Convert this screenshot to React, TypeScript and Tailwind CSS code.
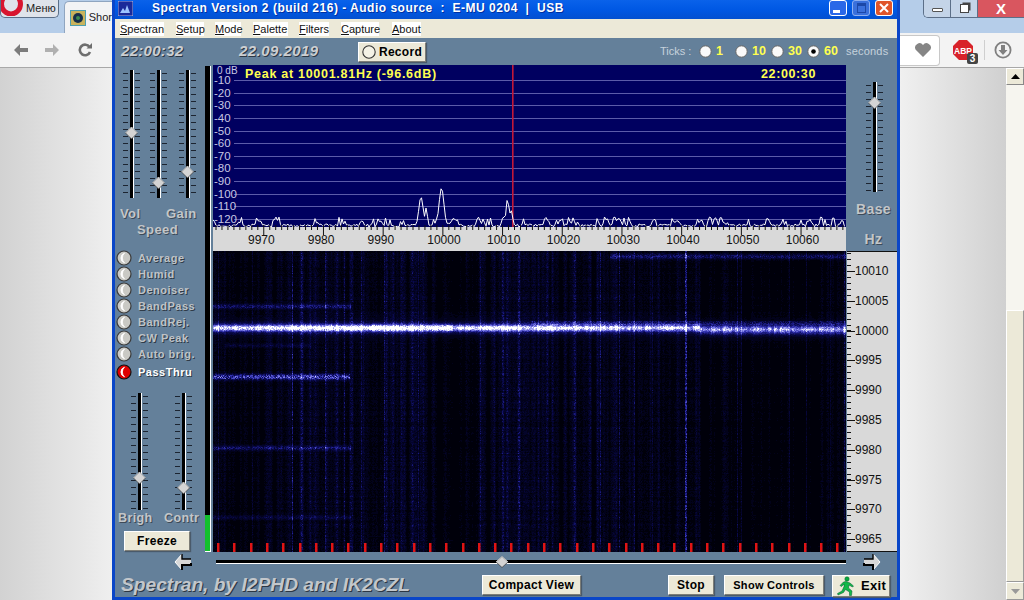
import React, { useMemo } from "react";

function rng(seed: number) {
  let a = seed;
  return () => {
    a |= 0;
    a = (a + 0x6d2b79f5) | 0;
    let t = Math.imul(a ^ (a >>> 15), 1 | a);
    t = (t + Math.imul(t ^ (t >>> 7), 61 | t)) ^ t;
    return ((t ^ (t >>> 14)) >>> 0) / 4294967296;
  };
}

const stops: [number, number[]][] = [
  [0, [0, 0, 10]],
  [0.25, [8, 8, 70]],
  [0.5, [40, 40, 165]],
  [0.75, [130, 130, 235]],
  [1, [255, 255, 255]],
];
function colour(t: number) {
  for (let i = 1; i < stops.length; i++) {
    if (t <= stops[i][0]) {
      const [a, ca] = stops[i - 1];
      const [b, cb] = stops[i];
      const k = (t - a) / (b - a);
      const c = ca.map((v, j) => Math.round(v + (cb[j] - v) * k));
      return `rgb(${c[0]},${c[1]},${c[2]})`;
    }
  }
  return "#fff";
}

const W = 633;
const H = 301;
const LEVELS = 16;

function useWaterfall() {
  return useMemo(() => {
    const r = rng(42);
    const raw = new Float32Array(W);
    for (let x = 0; x < W; x++) {
      const ax = x + 213;
      let region = 1.1;
      if (ax < 300) region = 0.75;
      else if (ax < 620) region = 1.15;
      else if (ax < 700) region = 0.85;
      else region = 0.4;
      if (ax > 426 && ax < 480) region *= 0.55;
      const v = r();
      raw[x] = region * (0.03 + 0.17 * v * v + (v > 0.88 ? 0.1 : 0));
    }
    const col = new Float32Array(W);
    for (let x = 0; x < W; x++) {
      col[x] = 0.25 * (raw[x - 1] ?? raw[x]) + 0.5 * raw[x] + 0.25 * (raw[x + 1] ?? raw[x]);
    }
    const lines: [number, number][] = [
      [218, 0.2], [252, 0.16], [292, 0.34], [325, 0.3], [344, 0.26], [361, 0.26], [384, 0.28], [418, 0.24],
      [480, 0.26], [546, 0.2], [600, 0.28], [619, 0.26], [634, 0.24], [652, 0.2], [685, 0.4], [686, 0.4],
      [737, 0.2], [741, 0.18], [789, 0.16], [806, 0.16], [830, 0.14], [844, 0.26],
    ];
    lines.forEach(([x, s]) => (col[x - 213] = s));

    const amp = new Float32Array(W);
    let cur = 0.8;
    for (let x = 0; x < W; x++) {
      const ax = x + 213;
      if (x % 3 === 0) cur = 0.62 + r() * 0.38;
      let m = 0.82;
      if (ax > 290 && ax < 450) m = 1.02;
      else if (ax > 450 && ax < 600) m = 0.86;
      else if (ax >= 600 && ax < 700) m = 0.76;
      else if (ax >= 700) m = 0.6;
      amp[x] = cur * m;
    }

    const streaks: [number, number, number, number, number][] = [
      [376.5, 213, 349, 0.56, 2.0],
      [306, 213, 350, 0.3, 1.8],
      [447.5, 213, 350, 0.3, 1.8],
      [345, 225, 310, 0.16, 1.2],
      [517, 213, 350, 0.16, 1.6],
      [256, 610, 846, 0.3, 1.8],
    ];

    const paths: string[] = Array.from({ length: LEVELS }, () => "");
    for (let y = 0; y < H; y++) {
      const ay = y + 251;
      const rowMul = 0.75 + 0.5 * r();
      let runL = -1;
      let runS = 0;
      for (let x = 0; x <= W; x++) {
        let lvl = 0;
        if (x < W) {
          const ax = x + 213;
          let i = col[x] * rowMul * (0.5 + r() * 0.9);
          const cy = ax < 700 ? 327.5 : 329;
          const sg = ax < 700 ? 2.6 : 3.3;
          const dy = ay - cy;
          i += amp[x] * (0.7 + r() * 0.5) * Math.exp(-(dy * dy) / (2 * sg * sg));
          i += 0.3 * Math.exp(-Math.abs(dy) / 5);
          if (ax > 530 && ay > 320 && ay < 325) i += 0.22 * r();
          for (const [sy, x0, x1, a, s] of streaks) {
            if (ax >= x0 && ax <= x1) {
              const d = ay - sy;
              if (Math.abs(d) < 6) i += a * (0.4 + r() * 0.9) * Math.exp(-(d * d) / (2 * s * s));
            }
          }
          lvl = Math.min(LEVELS - 1, Math.floor(i * LEVELS));
        }
        if (lvl !== runS) {
          if (runS > 0) paths[runS] += `M${runL} ${y}h${x - runL}v1h${-(x - runL)}z`;
          runL = x;
          runS = lvl;
        }
      }
    }
    return paths;
  }, []);
}

function useTrace() {
  return useMemo(() => {
    const r = rng(7);
    const base = 162;
    const peaks: [number, number, number][] = [
      [421 - 213, 30, 2.2],
      [426 - 213, 19, 1.4],
      [441.5 - 213, 39, 2.4],
      [507.5 - 213, 28, 1.5],
      [511 - 213, 17, 1.6],
    ];
    const pts: string[] = [];
    let burst = 0;
    for (let x = 0; x < W; x += 1.5) {
      if (r() < 0.12) burst = 2 + Math.floor(r() * 5);
      let h = r() * 3;
      if (burst > 0) {
        h = 1 + r() * 9;
        burst--;
      }
      for (const [px, a, s] of peaks) {
        const d = x - px;
        h = Math.max(h, a * Math.exp(-(d * d) / (2 * s * s)));
      }
      pts.push(`${x},${(base - h).toFixed(1)}`);
    }
    return pts.join(" ");
  }, []);
}

function Slider({ h, thumb }: { h: number; thumb: number }) {
  const ticks: number[] = [];
  for (let y = 3; y < h; y += 7) ticks.push(y);
  return (
    <svg width="24" height={h} className="block shrink-0">
      {ticks.map((y) => (
        <g key={y} fill="#1c2430">
          <rect x="4" y={y} width="5" height="1" />
          <rect x="16" y={y} width="5" height="1" />
        </g>
      ))}
      <rect x="11" y="0" width="3" height={h} fill="#000" />
      <rect x="14" y="0" width="1" height={h} fill="#fff" />
      <polygon
        points={`12.5,${thumb - 6} 18.5,${thumb} 12.5,${thumb + 6} 6.5,${thumb}`}
        fill="#d4d4d4"
        stroke="#333"
        strokeWidth="0.7"
      />
      <polyline points={`6.5,${thumb} 12.5,${thumb - 6} 18.5,${thumb}`} fill="none" stroke="#fff" strokeWidth="0.7" />
    </svg>
  );
}

function Led({ on }: { on?: boolean }) {
  return (
    <svg width="16" height="16" className="block shrink-0">
      <circle cx="8" cy="8" r="7" fill={on ? "#e00000" : "#c9c9c4"} stroke={on ? "#111" : "#3a3a3a"} strokeWidth="1.2" />
      <path d="M8.5 3.2 A5 5 0 0 0 8.5 12.8 A6.5 6.5 0 0 1 8.5 3.2z" fill="#fff" stroke="#fff" strokeWidth="0.8" />
    </svg>
  );
}

function TickRadio({ on }: { on?: boolean }) {
  return (
    <svg width="13" height="13" className="block shrink-0">
      <circle cx="6.5" cy="6.5" r="5.7" fill="#fafafa" stroke="#666" strokeWidth="1" />
      {on && <circle cx="6.5" cy="6.5" r="2.3" fill="#000" />}
    </svg>
  );
}

const btn =
  "flex items-center justify-center shrink-0 bg-[#ece9d8] border border-t-white border-l-white border-r-[#7d7d76] border-b-[#7d7d76] shadow-[1px_1px_1px_#4a5a6a] text-black font-bold text-[12px] tracking-[0.3px]";

const LABEL = "font-bold text-[#c3c6c9] [text-shadow:1px_1px_0_#3d4a58] leading-[16px] tracking-[0.4px]";

function Arrow({ dir }: { dir: "l" | "r" }) {
  return (
    <svg width="18" height="20" className={dir === "r" ? "block -scale-x-100" : "block"}>
      <path d="M8 2 L1 10 L8 18 V13 H17 V7 H8z" fill="#d8d8d8" />
      <path d="M8 2 L1 10 L8 18" fill="none" stroke="#fff" strokeWidth="1" />
      <path d="M8 18 V13 H17 V11" fill="none" stroke="#000" strokeWidth="2" />
      <path d="M8 2 V7 H17" fill="none" stroke="#000" strokeWidth="1.4" />
    </svg>
  );
}

function Runner() {
  return (
    <svg width="20" height="20" viewBox="0 0 20 20" className="block shrink-0">
      <circle cx="11" cy="3" r="2.2" fill="#0aa83c" stroke="#063" strokeWidth="0.5" />
      <path
        d="M10 5.5 L14 7 L17.5 10 L16.5 11 L13 9 L12.5 12 L16 15 L15.5 19.5 L13.5 19.5 L13.5 16 L9.5 13.5 L7.5 16.5 L2 19 L1.5 17.5 L6 15 L8 10.5 L8 8 L5.5 10.5 L4 9.5 L7.5 6z"
        fill="#12b848"
        stroke="#053"
        strokeWidth="0.5"
      />
    </svg>
  );
}

function Chart() {
  const trace = useTrace();
  const labels = ["0 dB", "-10", "-20", "-30", "-40", "-50", "-60", "-70", "-80", "-90", "-100", "-110", "-120"];
  const freq = ["9970", "9980", "9990", "10000", "10010", "10020", "10030", "10040", "10050", "10060"];
  const minors: number[] = [];
  for (let x = 3; x < W; x += 5.97) minors.push(x);
  return (
    <svg width={W} height="186" className="block shrink-0" fontFamily="'Liberation Sans', sans-serif">
      <rect width={W} height="162" fill="#000060" />
      <rect y="162" width={W} height="24" fill="#d9d9d9" />
      {labels.map((l, i) => {
        const y = 2.5 + i * 12.62;
        return i > 0 ? (
          <line key={l} x1="21" x2={W} y1={Math.round(y) + 0.5} y2={Math.round(y) + 0.5} stroke="#5c5caa" />
        ) : null;
      })}
      <rect x="299" y="0" width="1.6" height="162" fill="#c01838" />
      <polyline points={trace} fill="none" stroke="#fff" strokeWidth="1" />
      {labels.map((l, i) => {
        const y = 2.5 + i * 12.62;
        return (
          <text key={l} x={i === 0 ? 4 : 1} y={i === 0 ? 9 : y + 4} fontSize={i === 0 ? 10 : 11.5} fill="#c8c8e4">
            {l}
          </text>
        );
      })}
      {minors.map((x, i) => (
        <line key={x} x1={x} x2={x} y1="160" y2={(i + 2) % 10 === 0 ? 170 : 165} stroke="#111" />
      ))}
      {freq.map((f, i) => (
        <text key={f} x={35 + i * 59.75} y="179" fontSize="12" fill="#111">
          {f}
        </text>
      ))}
      <text x="32" y="12.5" fontSize="12.5" fontWeight="700" fill="#ffff50" letterSpacing="0.72">
        Peak at 10001.81Hz (-96.6dB)
      </text>
      <text x="548" y="12.5" fontSize="12.5" fontWeight="700" fill="#ffff50" letterSpacing="0.62">
        22:00:30
      </text>
    </svg>
  );
}

function Waterfall() {
  const paths = useWaterfall();
  const ticks: number[] = [];
  for (let i = 0; i < 39; i++) ticks.push(4 + i * 16.3);
  return (
    <svg width={W} height={H} className="block shrink-0 overflow-hidden">
      <rect width={W} height={H} fill="#00000a" />
      <g className="blur-[0.6px]" shapeRendering="crispEdges">
        {paths.map((d, i) => (i > 0 ? <path key={i} d={d} fill={colour(i / (LEVELS - 1))} /> : null))}
      </g>
      {ticks.map((x) => (
        <rect key={x} x={Math.round(x)} y="292" width="2.5" height="9" fill="#e01414" />
      ))}
    </svg>
  );
}

function FreqScale() {
  const labels = ["10010", "10005", "10000", "9995", "9990", "9985", "9980", "9975", "9970", "9965"];
  const minors: number[] = [];
  for (let y = 2; y < H; y += 5.96) minors.push(y);
  return (
    <svg width="50" height={H} className="block" fontFamily="'Liberation Sans', sans-serif">
      <rect width="50" height={H} fill="#d9d9d9" />
      <rect y="0" width="50" height="1" fill="#111" />
      <rect y={H - 1} width="50" height="1" fill="#111" />
      {minors.map((y) => (
        <line key={y} x1="0" x2="4" y1={Math.round(y) + 0.5} y2={Math.round(y) + 0.5} stroke="#111" />
      ))}
      {labels.map((l, i) => {
        const y = 20 + i * 29.8;
        return (
          <g key={l}>
            <line x1="0" x2="8" y1={Math.round(y) + 0.5} y2={Math.round(y) + 0.5} stroke="#111" />
            <text x="8" y={y + 4} fontSize="12" fill="#111">
              {l}
            </text>
          </g>
        );
      })}
    </svg>
  );
}

function LeftChrome() {
  return (
    <div className="w-[112px] h-full shrink-0 flex flex-col">
      <div className="h-[33px] bg-[#b5cde9] flex items-start relative overflow-hidden">
        <div className="w-[62px] h-[18px] rounded-b-[5px] bg-[#dfe3ea] border border-t-0 border-[#5c6f88] flex items-center overflow-hidden">
          <svg width="24" height="18" className="block shrink-0 -mt-[4px]">
            <ellipse cx="10" cy="6" rx="9.5" ry="10" fill="none" stroke="#d8152f" strokeWidth="5" />
          </svg>
          <span className="text-[11px] text-[#222] ml-[1px]">Меню</span>
        </div>
        <div className="ml-[5px] mt-[1px] flex-1 h-[32px] bg-[#f2f3f5] rounded-tl-[5px] border-l border-t border-[#8fa5c0] flex items-center pl-[5px]">
          <svg width="16" height="16" className="block shrink-0">
            <rect width="16" height="16" fill="#4d9fb0" />
            <rect x="1" y="1" width="14" height="14" fill="#c9b35c" />
            <circle cx="8" cy="8" r="5" fill="#16304a" />
            <circle cx="8" cy="8" r="2" fill="#3a8a50" />
          </svg>
          <span className="text-[11px] text-[#222] ml-[3px]">Shor</span>
        </div>
      </div>
      <div className="h-[35px] bg-[#f3f3f3] border-b border-[#a8a8a8] flex items-center pl-[14px] gap-[17px]">
        <svg width="14" height="12" viewBox="0 0 14 12" className="block shrink-0">
          <path d="M6 0 L0 6 L6 12 V8 H14 V4 H6z" fill="#7c7c7c" />
        </svg>
        <svg width="14" height="12" viewBox="0 0 14 12" className="block shrink-0">
          <path d="M8 0 L14 6 L8 12 V8 H0 V4 H8z" fill="#b0b0b0" />
        </svg>
        <svg width="14" height="14" viewBox="0 0 14 14" className="block shrink-0 ml-[2px]">
          <path d="M11.5 4 A5.3 5.3 0 1 0 12 9" fill="none" stroke="#6e6e6e" strokeWidth="2.6" />
          <path d="M8.5 5.5 H14 V0z" fill="#6e6e6e" />
        </svg>
      </div>
      <div className="flex-1 bg-gradient-to-r from-[#d2d2d2] to-[#efefef]" />
    </div>
  );
}

function RightChrome() {
  return (
    <div className="w-[124px] h-full shrink-0 flex flex-col">
      <div className="h-[33px] bg-[#b5cde9] flex items-start">
        <div className="ml-[23px] w-[101px] h-[18px] flex rounded-bl-[5px] overflow-hidden border-l border-b border-[#5c6f88]">
          <div className="w-[27px] bg-[#c4d4e8] border-r border-[#5c6f88] flex items-center justify-center">
            <div className="w-[11px] h-[4px] bg-white border border-[#555] rounded-[1px] mt-[3px]" />
          </div>
          <div className="w-[27px] bg-[#c4d4e8] border-r border-[#5c6f88] flex items-center justify-center">
            <div className="w-[9px] h-[9px] bg-white border border-[#444] shadow-[2px_-2px_0_-0.5px_#444]" />
          </div>
          <div className="flex-1 bg-[#d9565f] flex items-center justify-center text-white font-bold text-[15px] leading-none">
            X
          </div>
        </div>
      </div>
      <div className="h-[35px] bg-[#f3f3f3] border-b border-[#a8a8a8] flex items-center">
        <div className="w-[40px] h-[31px] shrink-0 bg-white border border-l-0 border-[#c8c8c8] rounded-r-[4px] flex items-center pl-[14px]">
          <svg width="18" height="16" viewBox="0 0 18 16" className="block shrink-0">
            <path d="M9 15 L1.5 7.5 A4.4 4.4 0 0 1 9 3 A4.4 4.4 0 0 1 16.5 7.5z" fill="#858585" />
          </svg>
        </div>
        <div className="ml-[12px] relative shrink-0">
          <svg width="22" height="22" viewBox="0 0 22 22" className="block">
            <polygon points="7,1 15,1 21,7 21,15 15,21 7,21 1,15 1,7" fill="#d8222a" />
            <text x="11" y="14.5" fontSize="8.5" fontWeight="700" fill="#fff" textAnchor="middle" fontFamily="'Liberation Sans', sans-serif">
              ABP
            </text>
          </svg>
          <span className="absolute -right-[4px] -bottom-[3px] w-[11px] h-[11px] bg-[#444] rounded-[2px] text-white text-[10px] font-bold leading-[11px] text-center">
            3
          </span>
        </div>
        <div className="w-px h-[20px] shrink-0 bg-[#cfcfcf] ml-[10px]" />
        <svg width="18" height="18" viewBox="0 0 18 18" className="block shrink-0 ml-[9px]">
          <circle cx="9" cy="9" r="7.6" fill="none" stroke="#808080" strokeWidth="1.8" />
          <path d="M7 4 H11 V9 H13.5 L9 14 L4.5 9 H7z" fill="#808080" />
        </svg>
      </div>
      <div className="flex-1 flex min-h-0">
        <div className="w-[106px] bg-gradient-to-r from-[#f0f0f0] to-[#d0d0d0]" />
        <div className="w-[18px] flex flex-col bg-[#f6f5ef]">
          <div className="h-[17px] bg-[#ece9d8] border border-t-white border-l-white border-r-[#888] border-b-[#888] flex items-center justify-center">
            <svg width="9" height="5" className="block">
              <path d="M0 5 L4.5 0 L9 5z" fill="#000" />
            </svg>
          </div>
          <div className="h-[225px]" />
          <div className="flex-1 bg-[#ece9d8] border border-t-white border-l-white border-r-[#999] border-b-[#999]" />
          <div className="h-[18px] bg-[#ece9d8] border border-t-white border-l-white border-r-[#999] border-b-[#999] flex items-center justify-center">
            <svg width="9" height="5" className="block">
              <path d="M0 0 L4.5 5 L9 0z" fill="#999" />
            </svg>
          </div>
        </div>
      </div>
    </div>
  );
}

function TitleBar() {
  return (
    <div className="h-[19px] shrink-0 bg-gradient-to-b from-[#0a62ea] via-[#0058e4] to-[#0350d0] flex items-center">
      <svg width="15" height="15" className="block shrink-0 ml-[3px] -mt-[3px]">
        <rect width="15" height="15" fill="#1a2a9a" stroke="#fff" strokeWidth="0.6" />
        <path d="M2 12 L5 7 L7 10 L9 4 L12 12z" fill="#9cc4ff" />
      </svg>
      <span className="ml-[19px] text-white font-bold text-[12px] tracking-[0.5px] whitespace-pre leading-none -mt-[4px] [text-shadow:1px_1px_0_#0030a0]">
        {"Spectran Version 2 (build 216) - Audio source  :  E-MU 0204  |  USB"}
      </span>
      <div className="ml-auto mr-[4px] flex gap-[5px] -mt-[3px]">
        <div className="w-[18px] h-[16px] rounded-[3px] border border-white bg-[#2a68e8] flex items-end justify-start pl-[3px] pb-[2px]">
          <div className="w-[7px] h-[3px] bg-white" />
        </div>
        <div className="w-[18px] h-[16px] rounded-[3px] border border-[#8fb0f0] bg-[#3a70dc] flex items-center justify-center">
          <div className="w-[9px] h-[10px] border border-[#1c48a8] border-t-[3px]" />
        </div>
        <div className="w-[18px] h-[16px] rounded-[3px] border border-white bg-[#e0552a] flex items-center justify-center">
          <svg width="10" height="10" className="block">
            <path d="M1 1 L9 9 M9 1 L1 9" stroke="#fff" strokeWidth="2" />
          </svg>
        </div>
      </div>
    </div>
  );
}

function MenuBar() {
  const items: [string, string, number, number][] = [
    ["S", "pectran", 5, 44],
    ["S", "etup", 12, 28],
    ["M", "ode", 11, 26],
    ["P", "alette", 12, 35],
    ["F", "ilters", 11, 30],
    ["C", "apture", 12, 38],
    ["A", "bout", 13, 29],
  ];
  return (
    <div className="h-[19px] shrink-0 bg-[#ece9d8] flex items-center text-[11px] text-[#111]">
      {items.map(([u, rest, gap, w]) => (
        <span key={u + rest} className="bg-white leading-[14px] whitespace-nowrap" style={{ marginLeft: gap, width: w }}>
          <span className="underline">{u}</span>
          {rest}
        </span>
      ))}
    </div>
  );
}

function Header() {
  const tick = "text-[#ffff50] font-bold text-[12.5px] leading-none shrink-0";
  return (
    <div className="h-[27px] shrink-0 flex items-center pl-[6px]">
      <span className="w-[118px] shrink-0 italic font-bold text-[15px] text-[#cdcfd2] [text-shadow:1px_1px_0_#2c3744] tracking-[0.3px]">
        22:00:32
      </span>
      <span className="w-[119px] shrink-0 italic font-bold text-[15px] text-[#cdcfd2] [text-shadow:1px_1px_0_#2c3744] tracking-[0.45px]">
        22.09.2019
      </span>
      <div className={`${btn} w-[68px] h-[20px] gap-[3px]`}>
        <svg width="14" height="14" className="block">
          <circle cx="7" cy="7" r="6.2" fill="#f4f2e6" stroke="#333" strokeWidth="1.1" />
        </svg>
        Record
      </div>
      <span className="ml-[234px] w-[39px] shrink-0 text-[11px] text-[#c6d2dc]">Ticks :</span>
      <TickRadio />
      <span className={`${tick} ml-[4px] w-[19px]`}>1</span>
      <TickRadio />
      <span className={`${tick} ml-[4px] w-[19px]`}>10</span>
      <TickRadio />
      <span className={`${tick} ml-[4px] w-[19px]`}>30</span>
      <TickRadio on />
      <span className={`${tick} ml-[4px] w-[22px]`}>60</span>
      <span className="shrink-0 text-[11px] text-[#c6d2dc] tracking-[0.2px]">seconds</span>
    </div>
  );
}

function LeftPanel() {
  const opts = ["Average", "Humid", "Denoiser", "BandPass", "BandRej.", "CW Peak", "Auto brig."];
  return (
    <div className="w-[90px] shrink-0 flex flex-col">
      <div className="flex pt-[5px] pl-[4px]">
        <Slider h={128} thumb={63} />
        <div className="ml-[3px]">
          <Slider h={128} thumb={113} />
        </div>
        <div className="ml-[5px]">
          <Slider h={128} thumb={102} />
        </div>
      </div>
      <div className={`flex mt-[8px] text-[13px] pl-[5px] ${LABEL}`}>
        <span className="w-[46px]">Vol</span>
        <span>Gain</span>
      </div>
      <div className={`pl-[22px] text-[13px] ${LABEL}`}>Speed</div>
      <div className="mt-[12px] flex flex-col pl-[1px]">
        {opts.map((o) => (
          <div key={o} className="h-[16px] flex items-center gap-[6px] text-[11px] font-bold text-[#bfc3c7] [text-shadow:1px_1px_0_#2f3b48] tracking-[0.5px]">
            <Led />
            <span>{o}</span>
          </div>
        ))}
        <div className="h-[16px] mt-[2px] flex items-center gap-[6px] text-[11px] font-bold text-white [text-shadow:1px_1px_0_#2f3b48] tracking-[0.5px]">
          <Led on />
          <span>PassThru</span>
        </div>
      </div>
      <div className="flex mt-[13px] pl-[12px]">
        <Slider h={117} thumb={85} />
        <div className="ml-[20px]">
          <Slider h={117} thumb={95} />
        </div>
      </div>
      <div className={`flex text-[12.5px] pl-[3px] ${LABEL}`}>
        <span className="w-[46px]">Brigh</span>
        <span>Contr</span>
      </div>
      <div className={`${btn} ml-[9px] mt-[5px] w-[66px] h-[20px]`}>Freeze</div>
    </div>
  );
}

function Meter() {
  return (
    <div className="w-[6px] mr-[2px] mt-[1px] h-[486px] shrink-0 bg-black border-r border-white flex flex-col justify-end">
      <div className="h-[36px] bg-[#12c02c]" />
      <div className="h-px bg-white" />
    </div>
  );
}

export default function App() {
  return (
    <div className="w-[1024px] h-[600px] flex overflow-hidden font-['Liberation_Sans',sans-serif] bg-white">
      <LeftChrome />
      <div className="w-[788px] h-full shrink-0 flex flex-col border-x-[3px] border-b-[3px] border-[#0a46c8] bg-[#0a46c8]">
        <TitleBar />
        <MenuBar />
        <div className="flex-1 min-h-0 flex flex-col bg-[#64809a]">
          <Header />
          <div className="flex h-[487px] shrink-0">
            <LeftPanel />
            <Meter />
            <div className="w-[633px] shrink-0 flex flex-col">
              <Chart />
              <Waterfall />
            </div>
            <div className="w-[1px] shrink-0" />
            <div className="flex-1 flex flex-col">
              <div className="h-[186px] shrink-0 flex flex-col items-center pl-[3px]">
                <div className="pt-[17px]">
                  <Slider h={110} thumb={21} />
                </div>
                <div className={`mt-[9px] text-[14px] ${LABEL}`}>Base</div>
                <div className={`mt-[14px] text-[14px] ${LABEL}`}>Hz</div>
              </div>
              <FreqScale />
            </div>
          </div>
          <div className="h-[20px] shrink-0 flex items-center pl-[59px]">
            <Arrow dir="l" />
            <svg width="630" height="20" className="block ml-[24px] shrink-0">
              <rect y="8" width="630" height="3" fill="#000" />
              <rect y="11" width="630" height="1" fill="#fff" />
              <polygon points="286,4.5 292,10 286,15.5 280,10" fill="#d4d4d4" stroke="#333" strokeWidth="0.7" />
              <polyline points="280,10 286,4.5 292,10" fill="none" stroke="#fff" strokeWidth="0.7" />
            </svg>
            <div className="ml-[17px]">
              <Arrow dir="r" />
            </div>
          </div>
          <div className="flex-1 flex items-start pl-[6px]">
            <span className="w-[361px] shrink-0 italic font-bold text-[19.2px] leading-[25px] text-[#c3c7cb] [text-shadow:1px_1px_0_#2c3744]">
              Spectran, by I2PHD and IK2CZL
            </span>
            <div className={`${btn} mt-[3px] w-[99px] h-[20px]`}>Compact View</div>
            <div className={`${btn} mt-[3px] ml-[87px] w-[46px] h-[20px]`}>Stop</div>
            <div className={`${btn} mt-[3px] ml-[10px] w-[100px] h-[20px] !text-[11px]`}>Show Controls</div>
            <div className={`${btn} mt-[3px] ml-[8px] w-[58px] h-[22px] !text-[13px] gap-[5px]`}>
              <Runner />
              Exit
            </div>
          </div>
        </div>
      </div>
      <RightChrome />
    </div>
  );
}
